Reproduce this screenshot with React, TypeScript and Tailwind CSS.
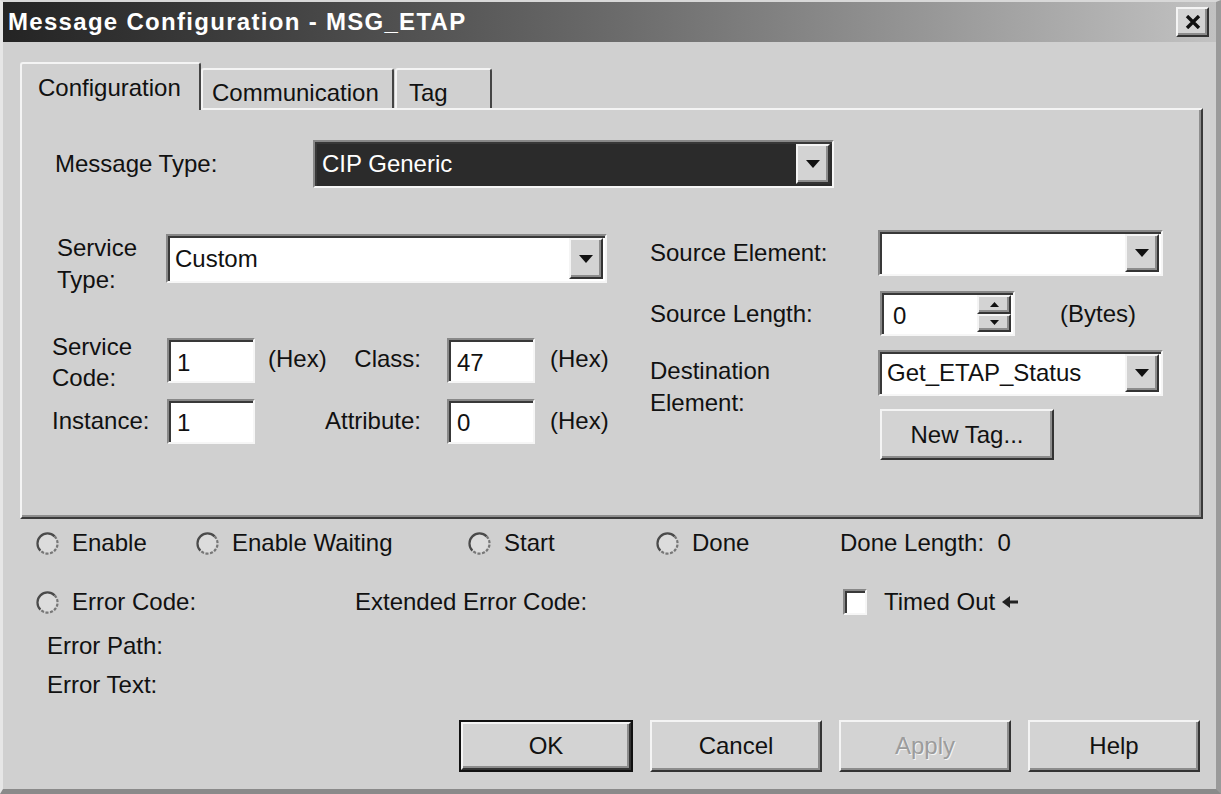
import React from "react";

const raised =
  "border-2 border-t-[#f4f4f4] border-l-[#f4f4f4] border-r-[#333333] border-b-[#333333] shadow-[inset_-2px_-2px_0_#8c8c8c] bg-[#d3d3d3]";
const sunken =
  "border-2 border-t-[#888888] border-l-[#888888] border-r-[#f6f6f6] border-b-[#f6f6f6] shadow-[inset_2px_2px_0_#383838]";

function DownTri({ w = 14, h = 8 }: { w?: number; h?: number }) {
  return (
    <svg width={w} height={h} viewBox="0 0 14 8">
      <polygon points="0,0 14,0 7,8" fill="#111" />
    </svg>
  );
}

function ArrowBtn() {
  return (
    <div className={`${raised} flex h-full w-[34px] shrink-0 items-center justify-center`}>
      <DownTri />
    </div>
  );
}

function Combo({ w, h, text, dark }: { w: string; h: string; text?: string; dark?: boolean }) {
  return (
    <div className={`${sunken} ${w} ${h} flex p-[2px] ${dark ? "bg-[#2b2b2b]" : "bg-white"}`}>
      <div className={`flex flex-1 items-center pl-[5px] ${dark ? "text-white" : "text-[#111]"}`}>{text}</div>
      <ArrowBtn />
    </div>
  );
}

function Field({ text }: { text: string }) {
  return (
    <div className={`${sunken} flex h-[45px] w-[88px] shrink-0 items-center bg-white pl-[8px] pt-[4px]`}>{text}</div>
  );
}

function Radio() {
  return (
    <svg width="25" height="25" viewBox="0 0 25 25" className="shrink-0">
      <circle cx="12.5" cy="12.5" r="10" fill="#dcdcdc" />
      <path d="M5.4 19.6 A10 10 0 0 1 19.6 5.4" stroke="#4a4a4a" strokeWidth="2.2" fill="none" />
      <path d="M19.6 5.4 A10 10 0 0 1 5.4 19.6" stroke="#777777" strokeWidth="2.2" fill="none" strokeDasharray="3 1.5" />
    </svg>
  );
}

function RadioItem({ label, w }: { label: string; w: string }) {
  return (
    <div className={`flex ${w} shrink-0 items-center gap-[12px]`}>
      <Radio />
      <span>{label}</span>
    </div>
  );
}

function Btn({ label, disabled, def }: { label: string; disabled?: boolean; def?: boolean }) {
  const inner = (
    <div
      className={`${raised} flex h-full w-full items-center justify-center ${
        disabled ? "text-[#9c9c9c] [text-shadow:1px_1px_0_#f4f4f4]" : "text-[#111]"
      }`}
    >
      {label}
    </div>
  );
  if (def)
    return <div className="h-[52px] w-[174px] shrink-0 border-2 border-[#111]">{inner}</div>;
  return <div className="h-[52px] w-[172px] shrink-0">{inner}</div>;
}

export default function App() {
  return (
    <div className="flex h-[794px] w-[1221px] flex-col overflow-hidden border-t-2 border-r-[5px] border-b-[5px] border-l-[3px] border-t-[#d8d8d8] border-r-[#9a9a9a] border-b-[#8a8a8a] border-l-[#e6e6e6] bg-[#d0d0d0] font-['Liberation_Sans',Arial,sans-serif] text-[24px] text-[#111]">
      {/* title bar */}
      <div className="flex h-[40px] shrink-0 items-center bg-gradient-to-r from-[#242424] via-[#6a6a6a] to-[#c2c2c2] pr-[7px] pl-[5px]">
        <span className="text-[24px] font-bold tracking-[1.3px] text-white">Message Configuration - MSG_ETAP</span>
        <div className={`${raised} ml-auto flex h-[30px] w-[33px] items-center justify-center`}>
          <svg width="16" height="14" viewBox="0 0 16 14">
            <path d="M2 1 L14 13 M14 1 L2 13" stroke="#111" strokeWidth="3.4" />
          </svg>
        </div>
      </div>

      {/* tabs */}
      <div className="pt-[20px] pl-[17px]">
        <div className="flex items-end">
          <div className="relative z-10 -mb-[2px] flex h-[48px] w-[181px] items-start rounded-t-[3px] border-t-2 border-r-2 border-l-2 border-t-[#f4f4f4] border-r-[#444] border-l-[#f4f4f4] bg-[#d0d0d0] pt-[6px] pl-[16px]">
            Configuration
          </div>
          <div className="flex h-[40px] w-[193px] items-start rounded-t-[3px] border-t-2 border-r-2 border-l-2 border-t-[#f4f4f4] border-r-[#444] border-l-[#f4f4f4] pt-[5px] pl-[9px]">
            Communication
          </div>
          <div className="ml-[1px] flex h-[40px] w-[97px] items-start rounded-t-[3px] border-t-2 border-r-2 border-l-2 border-t-[#f4f4f4] border-r-[#444] border-l-[#f4f4f4] pt-[5px] pl-[12px]">
            Tag
          </div>
        </div>

        {/* panel */}
        <div className="h-[411px] w-[1183px] border-t-2 border-r-2 border-b-2 border-l-2 border-t-[#f4f4f4] border-r-[#3a3a3a] border-b-[#3a3a3a] border-l-[#f4f4f4] shadow-[inset_-2px_-2px_0_#8e8e8e]">
          <div className="mt-[30px] flex items-center">
            <span className="ml-[33px] w-[258px]">Message Type:</span>
            <Combo w="w-[521px]" h="h-[48px]" text="CIP Generic" dark />
          </div>

          <div className="mt-[44px] flex">
            {/* left column */}
            <div className="ml-[30px] w-[598px]">
              <div className="flex items-start">
                <div className="w-[114px] pl-[5px] leading-[32px]">
                  Service
                  <br />
                  Type:
                </div>
                <div className="mt-[2px]">
                  <Combo w="w-[441px]" h="h-[49px]" text="Custom" />
                </div>
              </div>

              <div className="mt-[35px] flex items-start">
                <div className="w-[115px] leading-[31px]">
                  Service
                  <br />
                  Code:
                </div>
                <div className="mt-[7px]">
                  <Field text="1" />
                </div>
                <div className="mt-[12px] flex w-[192px] justify-between pr-[26px] pl-[13px] leading-[31px]">
                  <span>(Hex)</span>
                  <span>Class:</span>
                </div>
                <div className="mt-[7px]">
                  <Field text="47" />
                </div>
                <span className="mt-[12px] ml-[15px] leading-[31px]">(Hex)</span>
              </div>

              <div className="mt-[6px] flex h-[44px] items-center">
                <div className="w-[115px]">Instance:</div>
                <Field text="1" />
                <div className="flex w-[192px] justify-end pr-[26px]">Attribute:</div>
                <Field text="0" />
                <span className="ml-[15px]">(Hex)</span>
              </div>
            </div>

            {/* right column */}
            <div className="-mt-[2px]">
              <div className="flex h-[46px] items-center">
                <span className="w-[228px]">Source Element:</span>
                <Combo w="w-[285px]" h="h-[46px]" />
              </div>

              <div className="mt-[15px] flex h-[45px] items-center">
                <span className="w-[230px]">Source Length:</span>
                <div className={`${sunken} flex h-[45px] w-[135px] bg-white p-[2px]`}>
                  <div className="flex flex-1 items-center pt-[4px] pl-[9px]">0</div>
                  <div className="flex w-[34px] flex-col">
                    <div className={`${raised} flex flex-1 items-center justify-center`}>
                      <svg width="9" height="5" viewBox="0 0 9 5">
                        <polygon points="0,5 9,5 4.5,0" fill="#111" />
                      </svg>
                    </div>
                    <div className={`${raised} flex flex-1 items-center justify-center`}>
                      <svg width="9" height="5" viewBox="0 0 9 5">
                        <polygon points="0,0 9,0 4.5,5" fill="#111" />
                      </svg>
                    </div>
                  </div>
                </div>
                <span className="ml-[45px]">(Bytes)</span>
              </div>

              <div className="mt-[14px] flex items-start">
                <div className="mt-[5px] w-[228px] leading-[32px]">
                  Destination
                  <br />
                  Element:
                </div>
                <div className="flex flex-col">
                  <Combo w="w-[285px]" h="h-[46px]" text="Get_ETAP_Status" />
                  <div className={`${raised} mt-[13px] ml-[2px] flex h-[51px] w-[174px] items-center justify-center`}>
                    New Tag...
                  </div>
                </div>
              </div>
            </div>
          </div>
        </div>
      </div>

      {/* status area */}
      <div className="mt-[9px] flex h-[30px] items-center pl-[32px]">
        <RadioItem label="Enable" w="w-[160px]" />
        <RadioItem label="Enable Waiting" w="w-[272px]" />
        <RadioItem label="Start" w="w-[188px]" />
        <RadioItem label="Done" w="w-[185px]" />
        <span>Done Length:&nbsp; 0</span>
      </div>

      <div className="mt-[29px] flex h-[30px] items-center pl-[32px]">
        <RadioItem label="Error Code:" w="w-[320px]" />
        <span className="w-[488px] shrink-0">Extended Error Code:</span>
        <div className={`${sunken} h-[26px] w-[24px] shrink-0 bg-white`} />
        <span className="ml-[17px]">Timed Out</span>
        <svg width="18" height="12" viewBox="0 0 18 12" className="ml-[7px]">
          <polygon points="0,6 8,0 8,12" fill="#222" />
          <rect x="7" y="4.5" width="9" height="3" fill="#222" />
        </svg>
      </div>

      <div className="mt-[14px] h-[30px] pl-[44px] leading-[30px]">Error Path:</div>
      <div className="mt-[9px] h-[30px] pl-[44px] leading-[30px]">Error Text:</div>

      <div className="mt-[20px] flex items-start gap-[17px] pl-[456px]">
        <Btn label="OK" def />
        <Btn label="Cancel" />
        <Btn label="Apply" disabled />
        <Btn label="Help" />
      </div>
    </div>
  );
}
